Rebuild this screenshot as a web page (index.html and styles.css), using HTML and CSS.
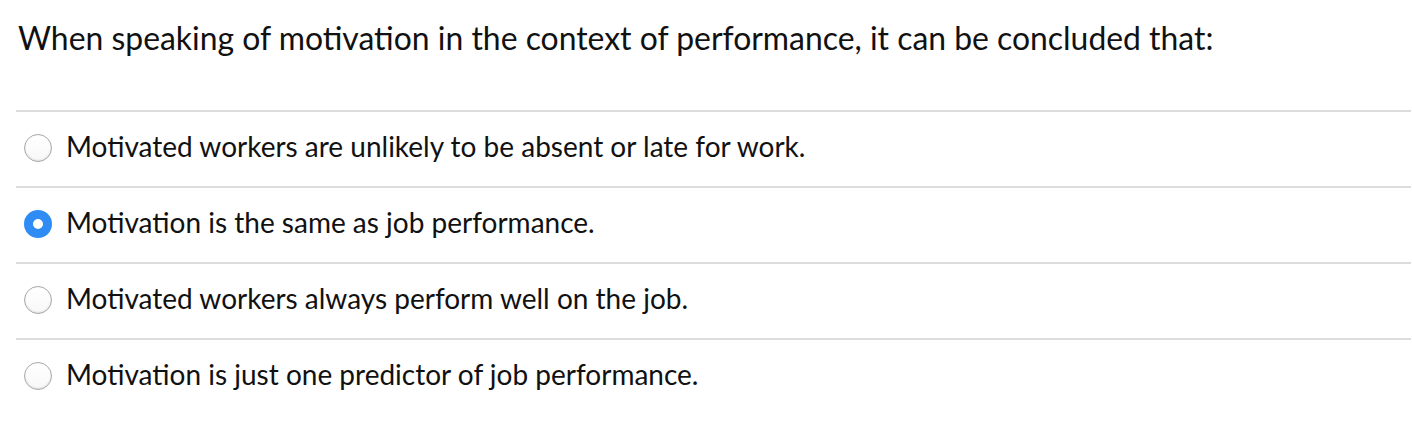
FILE: index.html
```html
<!DOCTYPE html>
<html lang="en">
<head>
<meta charset="utf-8">
<link rel="stylesheet" href="styles.css">
</head>
<body>
<div class="question">
  <div class="prompt">When speaking of motivation in the context of performance, it can be concluded that:</div>
  <div class="answers">
    <label class="answer"><span class="radio"></span><span class="text">Motivated workers are unlikely to be absent or late for work.</span></label>
    <label class="answer"><span class="radio checked"></span><span class="text">Motivation is the same as job performance.</span></label>
    <label class="answer"><span class="radio"></span><span class="text">Motivated workers always perform well on the job.</span></label>
    <label class="answer"><span class="radio"></span><span class="text">Motivation is just one predictor of job performance.</span></label>
  </div>
</div>
</body>
</html>
```
FILE: styles.css
```css
html, body {
  margin: 0;
  padding: 0;
  background: #ffffff;
}
body {
  font-family: Lato, "Open Sans", "Liberation Sans", sans-serif;
  color: #111111;
}
.question {
  padding: 0 1px 0 16px;
}
.prompt {
  font-size: 31.9px;
  line-height: 38px;
  padding: 19px 0 0 2px;
  height: 91px;
  border-bottom: 2px solid #dcdcdc;
}
.answers {
  display: flex;
  flex-direction: column;
}
.answer {
  display: flex;
  align-items: center;
  height: 74px;
  border-bottom: 2px solid #dcdcdc;
  gap: 14px;
  padding-left: 8px;
}
.answer:last-child {
  border-bottom: none;
}
.radio {
  flex: none;
  width: 28px;
  height: 28px;
  box-sizing: border-box;
  border-radius: 50%;
  border: 1px solid #a9a9a9;
  background: linear-gradient(#ffffff, #f8f8f8);
  box-shadow: inset 0 -1px 2px rgba(0,0,0,0.1);
  margin-top: -2px;
}
.radio.checked {
  border: 9.5px solid #2f8cf5;
  background: #ffffff;
  box-shadow: none;
}
.text {
  font-size: 28px;
  line-height: 34px;
  padding-bottom: 6px;
}
```
